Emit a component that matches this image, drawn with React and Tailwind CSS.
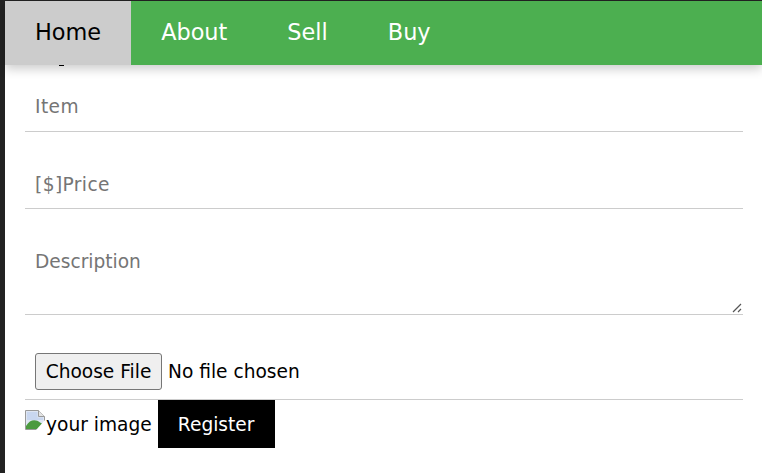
import React from 'react';

const fontStack = "font-['DejaVu_Sans',sans-serif]";

const BrokenImage = () => (
  <svg width="20" height="20" viewBox="0 0 20 20" className="shrink-0 self-start mt-[10px]">
    <path d="M0.5 0.5H13.5L19.5 6.5V14L14 19.5H0.5Z" fill="#dfe6f3" stroke="#9a9a9a" />
    <path d="M13.5 0.5V6.5H19.5" fill="#e4e4e4" stroke="#9a9a9a" />
    <path d="M2 2H12.5V7.5H18V10H2Z" fill="#c9d7f0" />
    <path d="M1 19V16C5 9 11 9 15 12.5L18 14L13.5 19Z" fill="#4c9a3f" />
    <path d="M20 10L11 20H20Z" fill="#fff" />
  </svg>
);

const Field = ({ label, className }) => (
  <div className={`border-b border-[#ccc] text-[18.6px] leading-[26px] text-[#757575] pl-[10px] ${className}`}>
    {label}
  </div>
);

export default function App() {
  return (
    <div className={`${fontStack} w-[762px] h-[473px] overflow-hidden bg-[#222] pl-[5px] pt-px text-black`}>
      <div className="relative h-full bg-white">
        <nav className="relative z-10 flex h-[64px] bg-[#4caf50] text-[22.4px] text-white shadow-[0_4px_10px_rgba(0,0,0,0.2)]">
          <a className="flex items-center bg-[#ccc] px-[30px] text-black">Home</a>
          <a className="flex items-center px-[30px]">About</a>
          <a className="flex items-center px-[30px]">Sell</a>
          <a className="flex items-center px-[30px]">Buy</a>
        </nav>
        <span className="absolute left-[54px] top-[64px] z-20 h-px w-[5px] bg-black" />
        <form className="ml-[20px] mr-[19px] flex flex-col">
          <Field label="Item" className="pt-[29px] pb-[11px] tracking-[0.4px]" />
          <Field label="[$]Price" className="pt-[40px] pb-[10px] tracking-[0.4px]" />
          <div className="relative border-b border-[#ccc] h-[106px] pl-[10px] pt-[40px] text-[18.6px] leading-[26px] text-[#757575]">
            Description
            <svg width="10" height="10" viewBox="0 0 10 10" className="absolute right-[1px] bottom-[1px]">
              <path d="M1 9L9 1M6 9L9 6" stroke="#555" strokeWidth="1.2" />
            </svg>
          </div>
          <div className="flex items-center border-b border-[#ccc] h-[85px] pl-[10px] pt-[38px] pb-[10px] text-[18.6px]">
            <span className="flex h-[37px] w-[127px] items-center justify-center rounded-[3px] border border-[#767676] bg-[#efefef] pt-[2px]">Choose File</span>
            <span className="ml-[6px] pt-[2px]">No file chosen</span>
          </div>
          <div className="flex text-[18.6px]">
            <BrokenImage />
            <span className="self-center ml-px pt-[2px]">your image</span>
            <button type="button" className="ml-[6px] h-[48px] w-[117px] bg-black pt-[2px] text-white">Register</button>
          </div>
        </form>
      </div>
    </div>
  );
}
